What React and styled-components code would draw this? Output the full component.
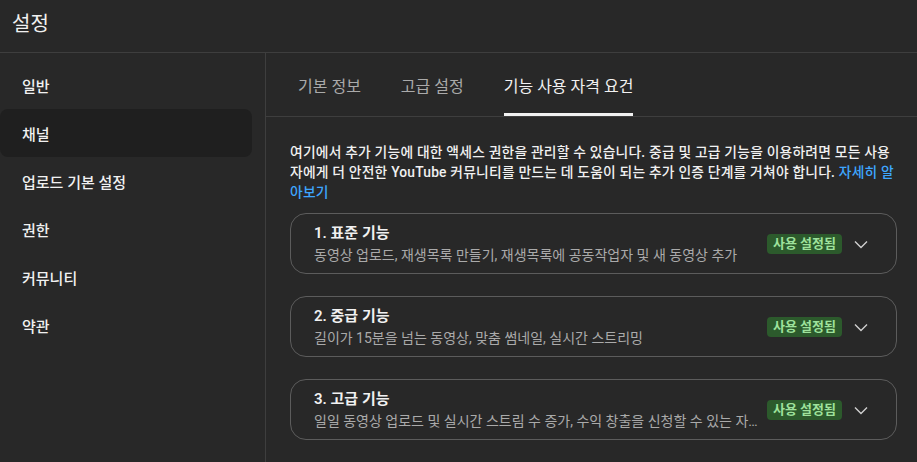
import styled, { createGlobalStyle } from 'styled-components'

const GlobalStyle = createGlobalStyle`
    * {
        box-sizing: border-box;
    }
    body {
        margin: 0;
        background-color: #282828;
        font-family: 'Roboto', 'Noto Sans CJK KR', sans-serif;
        color: #f1f1f1;
    }
`

const Page = styled.div`
    width: 917px;
    height: 462px;
    display: flex;
    flex-direction: column;
    background-color: #282828;
    overflow: hidden;
`

const Header = styled.header`
    height: 53px;
    flex-shrink: 0;
    display: flex;
    align-items: center;
    padding-left: 12px;
    padding-bottom: 8px;
    font-size: 20px;
    font-weight: 400;
    border-bottom: 1px solid #3e3e3e;
`

const Body = styled.div`
    flex: 1;
    display: flex;
`

const Sidebar = styled.nav`
    width: 266px;
    flex-shrink: 0;
    padding-top: 8px;
    border-right: 1px solid #3e3e3e;
`

const NavItem = styled.div`
    width: 252px;
    height: 48px;
    display: flex;
    align-items: center;
    padding-left: 22px;
    font-size: 15px;
    font-weight: 500;
    border-radius: 8px;
    background-color: ${props => props.active ? '#1f1f1f' : 'transparent'};
`

const Main = styled.main`
    flex: 1;
    min-width: 0;
    display: flex;
    flex-direction: column;
`

const TabBar = styled.div`
    height: 64px;
    display: flex;
    gap: 40px;
    padding-left: 32px;
    border-bottom: 1px solid #3e3e3e;
`

const Tab = styled.div`
    display: flex;
    align-items: center;
    padding-top: 3px;
    font-size: 16px;
    font-weight: 400;
    color: ${props => props.active ? '#f1f1f1' : '#aaaaaa'};
    border-bottom: 3px solid ${props => props.active ? '#f1f1f1' : 'transparent'};
`

const Content = styled.div`
    min-width: 0;
    padding: 25px 20px 0 24px;
    display: flex;
    flex-direction: column;
    gap: 22px;
`

const Description = styled.p`
    margin: 0 0 -11px;
    font-size: 13.8px;
    font-weight: 500;
    letter-spacing: 0.2px;
    line-height: 20px;
    padding-right: 2px;
`

const Link = styled.a`
    color: #3ea6ff;
    text-decoration: none;
`

const Card = styled.section`
    height: 61px;
    display: flex;
    align-items: center;
    gap: 12px;
    padding: 0 26px 0 23px;
    border: 1px solid #5c5c5c;
    border-radius: 16px;
`

const CardText = styled.div`
    flex: 1;
    min-width: 0;
    margin-right: -6px;
    display: flex;
    flex-direction: column;
    gap: 3px;
`

const CardTitle = styled.h2`
    margin: 0;
    font-size: 15px;
    font-weight: 600;
    line-height: 20px;
`

const CardSub = styled.p`
    margin: 0;
    font-size: 14px;
    line-height: 19px;
    color: #aaaaaa;
    white-space: nowrap;
    overflow: hidden;
    text-overflow: ellipsis;
`

const Badge = styled.span`
    flex-shrink: 0;
    padding: 1px 6px;
    font-size: 13px;
    font-weight: 600;
    line-height: 18px;
    color: #9ee29c;
    background-color: #2c5a2c;
    border-radius: 4px;
`

const Chevron = styled.svg`
    flex-shrink: 0;
    width: 18px;
    height: 18px;
    margin-left: -2px;
    stroke: #cfcfcf;
    fill: none;
    stroke-width: 1.4;
`

const navItems = ['일반', '채널', '업로드 기본 설정', '권한', '커뮤니티', '약관']

const features = [
    { title: '1. 표준 기능', sub: '동영상 업로드, 재생목록 만들기, 재생목록에 공동작업자 및 새 동영상 추가' },
    { title: '2. 중급 기능', sub: '길이가 15분을 넘는 동영상, 맞춤 썸네일, 실시간 스트리밍' },
    { title: '3. 고급 기능', sub: '일일 동영상 업로드 및 실시간 스트림 수 증가, 수익 창출을 신청할 수 있는 자격 요건 충족 등' },
]

function App() {
    return (
        <>
            <GlobalStyle />
            <Page>
                <Header>설정</Header>
                <Body>
                    <Sidebar>
                        {navItems.map(item => (
                            <NavItem key={item} active={item === '채널'}>
                                {item}
                            </NavItem>
                        ))}
                    </Sidebar>
                    <Main>
                        <TabBar>
                            <Tab>기본 정보</Tab>
                            <Tab>고급 설정</Tab>
                            <Tab active>기능 사용 자격 요건</Tab>
                        </TabBar>
                        <Content>
                            <Description>
                                여기에서 추가 기능에 대한 액세스 권한을 관리할 수 있습니다. 중급 및 고급 기능을 이용하려면 모든 사용자에게 더 안전한 YouTube 커뮤니티를 만드는 데 도움이 되는 추가 인증 단계를 거쳐야 합니다. <Link href="#">자세히 알아보기</Link>
                            </Description>
                            {features.map(f => (
                                <Card key={f.title}>
                                    <CardText>
                                        <CardTitle>{f.title}</CardTitle>
                                        <CardSub>{f.sub}</CardSub>
                                    </CardText>
                                    <Badge>사용 설정됨</Badge>
                                    <Chevron viewBox="0 0 18 18">
                                        <path d="M3 6.5l6 6 6-6" />
                                    </Chevron>
                                </Card>
                            ))}
                        </Content>
                    </Main>
                </Body>
            </Page>
        </>
    )
}

export default App
